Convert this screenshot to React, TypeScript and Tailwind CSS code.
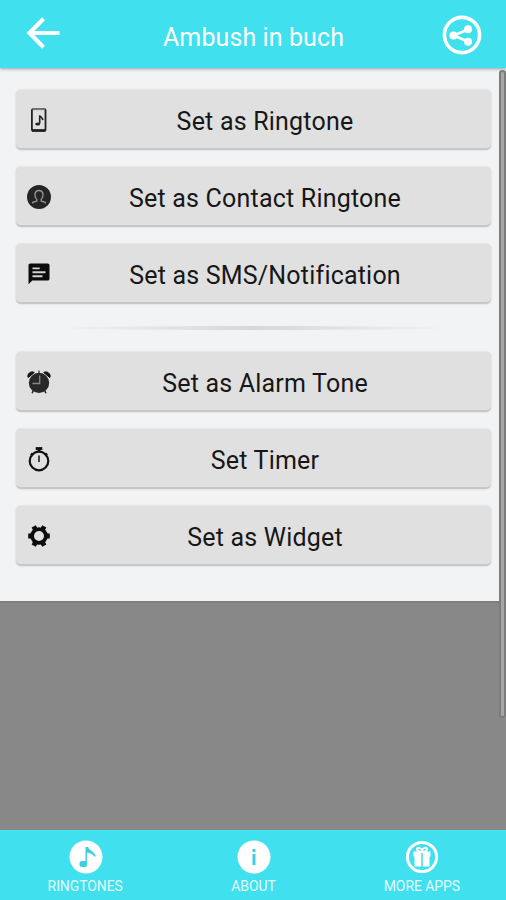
import { ReactNode } from "react";

type TAction = {
  label: string;
  icon: ReactNode;
  className: string;
};

const PhoneIcon = () => (
  <svg viewBox="0 0 24 26" className="w-6 h-[26px]" fill="none" stroke="#222">
    <rect x="4.900" y="1.900" width="13.600" height="22" rx="1.600" strokeWidth="1.800" />
    <path d="M5 23.400h13.400" strokeWidth="2.600" />
    <path d="M5.500 2.100h12.400" stroke="#777" strokeWidth="2" />
    <path d="M12.700 16.500V8.300c.4 2 3 2 3.100 4.800" strokeWidth="1.600" />
    <ellipse cx="10.700" cy="17" rx="2.500" ry="1.600" fill="#222" stroke="none" />
  </svg>
);

const ContactIcon = () => (
  <svg viewBox="0 0 24 24" className="w-6 h-6" fill="none">
    <circle cx="12" cy="12" r="12" fill="#252525" />
    <path
      d="M5.800 18.600v-1.300l4-1.300v-1.600C8.200 12.800 7.800 11.200 8 9.500 8.200 6.800 9.700 5.500 12 5.500s3.800 1.300 4 4c.2 1.700-.2 3.300-1.800 4.900V16l4 1.300v1.300"
      stroke="#999"
      strokeWidth="1.300"
    />
  </svg>
);

const MessageIcon = () => (
  <svg viewBox="0 0 24 24" className="w-6 h-6" fill="none">
    <path d="M3.300 1.400h17.400c1 0 1.800.8 1.800 1.800v13.600c0 1-.8 1.800-1.800 1.800H5.300L1.500 22.200V3.200c0-1 .8-1.800 1.800-1.800z" fill="#0c0c0c" />
    <path d="M5.500 6.400h7.200M5.500 10.300h13M5.500 14.200h10" stroke="#d2d2d2" strokeWidth="1.900" />
  </svg>
);

const AlarmIcon = () => (
  <svg viewBox="0 0 24 24" className="w-6 h-6" fill="none">
    <path d="M1.200 7.600C-.4 4 4 .4 7.300 2.500zM22.800 7.600C24.400 4 20 .4 16.700 2.500z" fill="#111" stroke="#111" />
    <path d="M6.500 20l-1.400 3.300M17.500 20l1.400 3.300" stroke="#222" strokeWidth="1.500" />
    <path d="M12 .5v3" stroke="#777" strokeWidth="2" />
    <circle cx="12" cy="12.900" r="10.200" fill="#282828" />
    <path d="M12.700 5.500v8H5.500" stroke="#888" strokeWidth="1.300" />
  </svg>
);

const TimerIcon = () => (
  <svg viewBox="0 0 24 26" className="w-6 h-[26px]" fill="none" stroke="#111">
    <circle cx="12" cy="15" r="9.300" strokeWidth="2.200" />
    <path d="M8.700 2.600h6.600" strokeWidth="3" />
    <path d="M12 3v3M4 7.500l2 2M20 7.500l-2 2" strokeWidth="2.600" />
    <path d="M12 9.500v6.500" stroke="#444" strokeWidth="2" />
  </svg>
);

const GearIcon = () => (
  <svg viewBox="0 0 24 24" className="w-6 h-6" fill="none" stroke="#0c0c0c">
    <circle cx="12" cy="12" r="6.900" strokeWidth="3.800" />
    <path
      d="M1.200 12h4M18.800 12h4M6.700 2.400l1.800 3.200M15.500 18.400l1.800 3.200M17.300 2.400l-1.800 3.200M8.500 18.400l-1.800 3.200"
      strokeWidth="4.800"
    />
  </svg>
);

const actions: TAction[] = [
  { label: "Set as Ringtone", icon: <PhoneIcon />, className: "mb-[17px]" },
  { label: "Set as Contact Ringtone", icon: <ContactIcon />, className: "mb-[17px]" },
  { label: "Set as SMS/Notification", icon: <MessageIcon />, className: "" },
];

const tools: TAction[] = [
  { label: "Set as Alarm Tone", icon: <AlarmIcon />, className: "mb-[17px]" },
  { label: "Set Timer", icon: <TimerIcon />, className: "mb-[17px]" },
  { label: "Set as Widget", icon: <GearIcon />, className: "" },
];

const ActionButton = ({ label, icon, className }: TAction) => {
  return (
    <button
      className={`flex h-[60px] w-full shrink-0 items-center rounded-[5px] border-b-2 border-[#c6c7c8] bg-[#e0e0e0] pl-[11px] pr-3 pt-0.5 shadow-[0_0_2px_#c4c6c8] ${className}`}
    >
      {icon}
      <span className="flex-1 pt-[3px] text-center text-[25px] leading-8 tracking-[0.2px] text-[#171717]">
        {label}
      </span>
    </button>
  );
};

const Header = () => {
  return (
    <header className="z-10 flex h-[68px] shrink-0 items-center justify-between bg-[#40e0ee] pl-[26px] pr-6 text-white shadow-[0_1px_3px_#9a9fa3]">
      <svg viewBox="0 0 36 34" className="mb-0.5 h-[34px] w-9" fill="none" stroke="white" strokeWidth="4.200">
        <path d="M33.500 17H4M17.500 2.800L3.500 17L17.500 31.200" />
      </svg>
      <h1 className="pl-[3px] pt-2 text-[25px] leading-8 tracking-[0.1px]">Ambush in buch</h1>
      <svg viewBox="0 0 40 40" className="mt-0.5 h-10 w-10" fill="none" stroke="white">
        <circle cx="20" cy="20" r="17.600" strokeWidth="3.600" />
        <path d="M26 14.500L11.500 20.500L26 26.500" strokeWidth="2.600" />
        <g fill="white" stroke="none">
          <circle cx="26" cy="14.300" r="4" />
          <circle cx="11.500" cy="20.500" r="4" />
          <circle cx="26" cy="26.700" r="4" />
        </g>
      </svg>
    </header>
  );
};

const Footer = () => {
  return (
    <footer className="grid h-[70px] shrink-0 grid-cols-3 bg-[#40e0ee] pl-px pt-2.5 text-[14px] leading-5 tracking-[-0.1px] text-[#e4fcff]">
      <div className="flex flex-col items-center gap-0.5">
        <svg viewBox="0 0 34 34" className="ml-px h-[34px] w-[34px]">
          <circle cx="17" cy="17" r="16.500" fill="white" />
          <path d="M17.200 7v16.500M18 7c1 4.200 6.700 4.200 8.200 9.300-2.500-3.300-5-4.300-8.200-4.300z" fill="#40cfdd" stroke="#40cfdd" strokeWidth="1.500" />
          <rect x="10.500" y="21" width="7.500" height="6" rx="2.500" fill="#40cfdd" />
        </svg>
        <span>RINGTONES</span>
      </div>
      <div className="flex flex-col items-center gap-0.5">
        <svg viewBox="0 0 34 34" className="ml-px h-[34px] w-[34px]">
          <circle cx="17" cy="17" r="16.500" fill="white" />
          <path d="M17 9v3M17 14v11" stroke="#40cfdd" strokeWidth="3" />
        </svg>
        <span>ABOUT</span>
      </div>
      <div className="flex flex-col items-center gap-0.5">
        <svg viewBox="0 0 34 34" className="ml-px h-[34px] w-[34px]" fill="none" stroke="white">
          <circle cx="17" cy="17" r="14.600" strokeWidth="3" />
          <path d="M8.500 11.500h7.700v5H8.500zM17.800 11.500h7.700v5h-7.700zM9.500 16h6.700v10.500H9.500zM17.800 16h6.700v10.500h-6.700z" fill="white" stroke="none" />
          <path d="M17 12c-5 0-6.500-4-3.500-4.300C15.500 7.700 17 10 17 12c0-2 1.500-4.300 3.500-4.300C23.500 8 22 12 17 12z" strokeWidth="2" />
        </svg>
        <span>MORE APPS</span>
      </div>
    </footer>
  );
};

const App = () => {
  return (
    <div className="flex h-[900px] w-[506px] flex-col overflow-hidden bg-[#888888] font-['Roboto',sans-serif]">
      <Header />
      <main className="relative flex-1">
        <section className="flex h-[535px] flex-col border-b-2 border-[#7d807e] bg-[#f1f3f5] pl-4 pr-[15px] pt-[22px]">
          {actions.map((item) => (
            <ActionButton key={item.label} {...item} />
          ))}
          <div className="mx-auto mb-[22px] mt-[22px] h-[4px] w-[400px] shrink-0 rounded-[50%] bg-linear-to-r from-transparent via-[#d5d7d8] to-transparent" />
          {tools.map((item) => (
            <ActionButton key={item.label} {...item} />
          ))}
        </section>
        {/* scrollbar thumb */}
        <div className="absolute right-0 top-[2px] h-[648px] w-[7px] rounded-[3px] border-2 border-[#7c7c7c] bg-[#a6a6a6]" />
      </main>
      <Footer />
    </div>
  );
};

export default App;
